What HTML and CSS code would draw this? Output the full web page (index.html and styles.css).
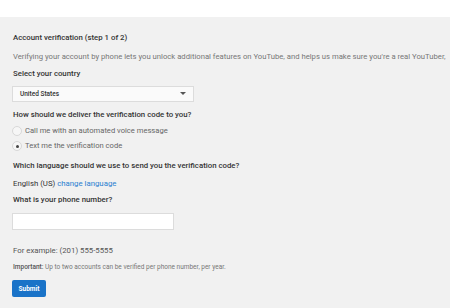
FILE: index.html
```html
<!DOCTYPE html>
<html>
<head>
<meta charset="utf-8">
<link rel="stylesheet" href="styles.css">
</head>
<body>
<div class="top"></div>
<main class="content">
  <h1 class="title">Account verification (step 1 of 2)</h1>
  <p class="desc">Verifying your account by phone lets you unlock additional features on YouTube, and helps us make sure you're a real YouTuber,</p>
  <h2 class="label l-country">Select your country</h2>
  <div class="select">
    <span class="select-text">United States</span>
    <svg class="caret" width="6" height="4" viewBox="0 0 6 4"><path d="M0 0h6L3 3z" fill="#555"/></svg>
  </div>
  <h2 class="label l-deliver">How should we deliver the verification code to you?</h2>
  <div class="radio r1"><span class="dot"></span><span>Call me with an automated voice message</span></div>
  <div class="radio r2"><span class="dot on"></span><span>Text me the verification code</span></div>
  <h2 class="label l-lang">Which language should we use to send you the verification code?</h2>
  <p class="lang">English (US) <a class="link">change language</a></p>
  <h2 class="label l-phone">What is your phone number?</h2>
  <div class="input"></div>
  <p class="example">For example: (201) 555-5555</p>
  <p class="important"><strong>Important:</strong> Up to two accounts can be verified per phone number, per year.</p>
  <button class="submit">Submit</button>
</main>
</body>
</html>
```
FILE: styles.css
```css
html, body { margin: 0; padding: 0; }
body {
  background: #f1f1f1;
  font-family: Roboto, "Noto Sans", Arial, sans-serif;
  color: #333;
  width: 450px;
  height: 308px;
  overflow: hidden;
}
.top { height: 17px; background: #fff; }
.content { padding: 15px 0 0 13px; white-space: nowrap; }
.title { margin: 0; font-size: 7.8px; font-weight: 500; line-height: 12px; color: #333; }
.desc { margin: 7px 0 0; font-size: 7.7px; line-height: 12px; color: #777; }
.label { margin: 0; font-size: 7.8px; font-weight: 500; line-height: 12px; color: #333; }
.l-country { margin-top: 5px; }
.select {
  margin: 6px 0 0 -1px;
  height: 14px;
  border: 1px solid #dcdcdc;
  background: #fafafa;
  display: flex; align-items: center; justify-content: space-between;
  padding: 0 7px 0 7px;
  width: 166px;
}
.select-text { font-size: 6.5px; font-weight: 500; color: #333; }
.caret { display: block; }
.l-deliver { margin-top: 7px; }
.radio { display: flex; align-items: center; gap: 3px; height: 12px; font-size: 7.6px; color: #666; line-height: 12px; }
.r1 { margin-top: 4px; }
.r2 { margin-top: 3px; }
.dot {
  width: 8px; height: 8px; border-radius: 50%;
  border: 1px solid #d8d8d8; background: #f6f6f6;
  position: relative; margin-left: -1px;
}
.dot.on::after {
  content: ""; position: absolute; left: 2.5px; top: 2.5px;
  width: 3px; height: 3px; border-radius: 50%; background: #444;
}
.l-lang { margin-top: 8px; }
.lang { margin: 6px 0 0; font-size: 7.8px; line-height: 12px; color: #333; }
.link { color: #2a7fd0; text-decoration: none; }
.l-phone { margin-top: 4px; }
.input {
  margin: 7px 0 0 -1px;
  width: 160px; height: 15px;
  border: 1px solid #dcdcdc; background: #fff;
}
.example { margin: 15px 0 0; font-size: 7.8px; line-height: 12px; color: #555; }
.important { margin: 5px 0 0; font-size: 6.5px; line-height: 10px; color: #777; }
.important strong { font-weight: 500; color: #555; }
.submit {
  display: block; margin: 8px 0 0 -1px;
  width: 34px; height: 17px;
  background: #1a73c8; color: #fff; border: 0; border-radius: 2px;
  font-family: inherit; font-size: 6.5px; font-weight: 700; padding: 0;
}
```
